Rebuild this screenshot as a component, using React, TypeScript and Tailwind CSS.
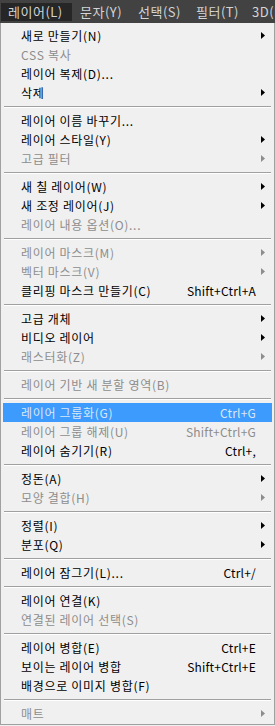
type Item =
  | { sep: true }
  | { sep?: false; label: string; shortcut?: string; sub?: boolean; disabled?: boolean; active?: boolean }

const items: Item[] = [
  { label: '새로 만들기(N)', sub: true },
  { label: 'CSS 복사', disabled: true },
  { label: '레이어 복제(D)...' },
  { label: '삭제', sub: true },
  { sep: true },
  { label: '레이어 이름 바꾸기...' },
  { label: '레이어 스타일(Y)', sub: true },
  { label: '고급 필터', sub: true, disabled: true },
  { sep: true },
  { label: '새 칠 레이어(W)', sub: true },
  { label: '새 조정 레이어(J)', sub: true },
  { label: '레이어 내용 옵션(O)...', disabled: true },
  { sep: true },
  { label: '레이어 마스크(M)', sub: true, disabled: true },
  { label: '벡터 마스크(V)', sub: true, disabled: true },
  { label: '클리핑 마스크 만들기(C)', shortcut: 'Shift+Ctrl+A' },
  { sep: true },
  { label: '고급 개체', sub: true },
  { label: '비디오 레이어', sub: true },
  { label: '래스터화(Z)', sub: true, disabled: true },
  { sep: true },
  { label: '레이어 기반 새 분할 영역(B)', disabled: true },
  { sep: true },
  { label: '레이어 그룹화(G)', shortcut: 'Ctrl+G', active: true },
  { label: '레이어 그룹 해제(U)', shortcut: 'Shift+Ctrl+G', disabled: true },
  { label: '레이어 숨기기(R)', shortcut: 'Ctrl+,' },
  { sep: true },
  { label: '정돈(A)', sub: true },
  { label: '모양 결합(H)', sub: true, disabled: true },
  { sep: true },
  { label: '정렬(I)', sub: true },
  { label: '분포(Q)', sub: true },
  { sep: true },
  { label: '레이어 잠그기(L)...', shortcut: 'Ctrl+/' },
  { sep: true },
  { label: '레이어 연결(K)' },
  { label: '연결된 레이어 선택(S)', disabled: true },
  { sep: true },
  { label: '레이어 병합(E)', shortcut: 'Ctrl+E' },
  { label: '보이는 레이어 병합', shortcut: 'Shift+Ctrl+E' },
  { label: '배경으로 이미지 병합(F)' },
  { sep: true },
  { label: '매트', sub: true, disabled: true },
]

const Arrow = ({ color }: { color: string }) => (
  <svg width="4" height="7" viewBox="0 0 4 7" className="block">
    <path d="M0 0L4 3.5L0 7Z" fill={color} />
  </svg>
)

export default function App() {
  return (
    <div
      className="w-[275px] h-[726px] overflow-hidden bg-[#f0f0f0] text-[12px] leading-none"
      style={{ fontFamily: '"Noto Sans CJK KR", "Noto Sans", sans-serif' }}
    >
      {/* menu bar */}
      <div className="h-[23px] bg-[#424242] flex items-center whitespace-nowrap text-[#d4d4d4] text-[13px] tracking-[0.5px]">
        <div className="ml-[1px] h-[18px] w-[71px] shrink-0 flex items-center pl-[7px] bg-[#262626]">레이어(L)</div>
        <div className="ml-[8px] w-[58px] shrink-0">문자(Y)</div>
        <div className="w-[58px] shrink-0">선택(S)</div>
        <div className="w-[56px] shrink-0">필터(T)</div>
        <div className="shrink-0">3D(D)</div>
      </div>

      {/* dropdown */}
      <div className="border-x border-b border-[#a0a0a0] pt-[3px] pb-[1px]">
        {items.map((it, i) =>
          it.sep ? (
            <div key={i} className="h-[9px] flex flex-col justify-center mx-[3px]">
              <div className="h-px bg-[#a0a0a0]" />
              <div className="h-px bg-white" />
            </div>
          ) : (
            <div
              key={i}
              className={`mx-[2px] h-[19px] flex items-center pl-[18px] whitespace-nowrap ${
                it.active ? 'bg-[#3d9bfd] text-[#dbe7f5]' : it.disabled ? 'text-[#8d8d8d]' : 'text-black'
              }`}
            >
              <span className="flex-1 tracking-[0.7px]">{it.label}</span>
              {it.shortcut && <span className="tracking-[0.2px]">{it.shortcut}</span>}
              <span className="w-[16px] flex pl-[5px]">
                {it.sub && <Arrow color={it.disabled ? '#8d8d8d' : '#000'} />}
              </span>
            </div>
          )
        )}
      </div>
    </div>
  )
}
